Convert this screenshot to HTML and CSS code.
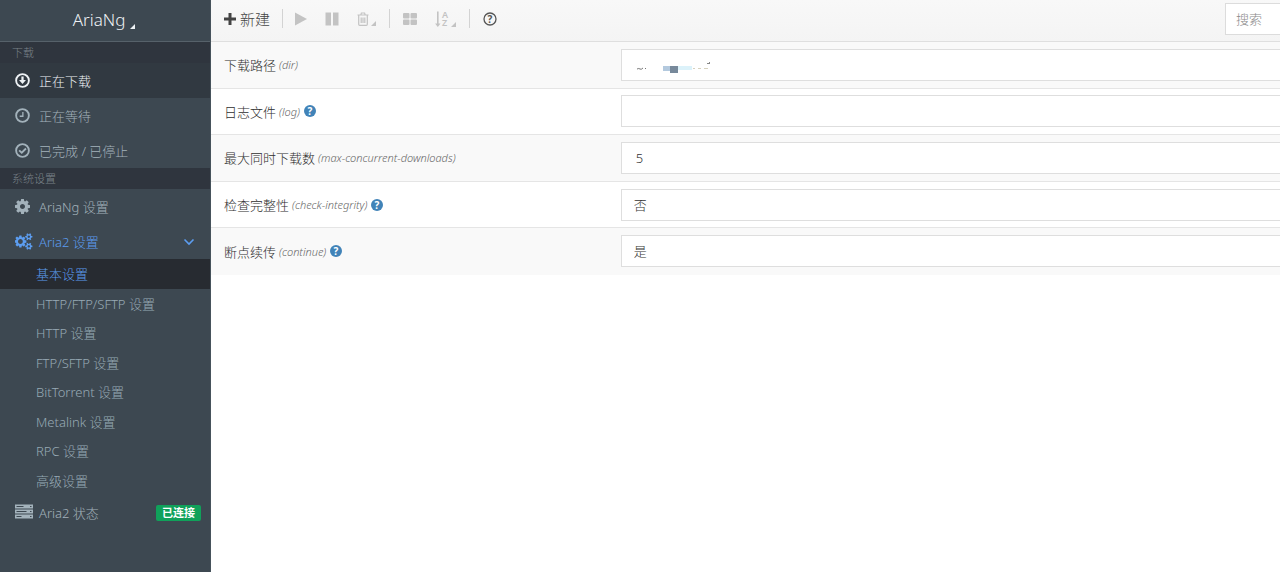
FILE: index.html
```html
<!DOCTYPE html>
<html lang="zh-CN">
<head>
<meta charset="utf-8">
<title>AriaNg</title>
<link rel="stylesheet" href="styles.css">
</head>
<body>
<div class="app">
  <aside class="sidebar">
    <button class="brand" type="button">AriaNg<svg class="corner" viewBox="0 0 6 6"><path d="M6 0v6H0z"/></svg></button>
    <nav class="nav">
      <h2 class="nav-title">下载</h2>
      <a class="nav-item is-current" href="#downloading">
        <svg class="icon" viewBox="0 0 16 16"><circle cx="8" cy="8" r="6.800" fill="none" stroke="currentColor" stroke-width="2"/><path d="M6.800 3.800h2.400v3.600h2.500L8 11.600 4.300 7.400h2.500z"/></svg>
        <span class="nav-text">正在下载</span></a>
      <a class="nav-item" href="#waiting">
        <svg class="icon" viewBox="0 0 16 16"><circle cx="8" cy="8" r="6.800" fill="none" stroke="currentColor" stroke-width="2"/><path d="M8.400 4.200v4.600H5" fill="none" stroke="currentColor" stroke-width="1.400"/></svg>
        <span class="nav-text">正在等待</span></a>
      <a class="nav-item" href="#stopped">
        <svg class="icon" viewBox="0 0 16 16"><circle cx="8" cy="8" r="6.800" fill="none" stroke="currentColor" stroke-width="2"/><path d="M4.400 7.800l2.800 2.600 4.500-4.500" fill="none" stroke="currentColor" stroke-width="2"/></svg>
        <span class="nav-text">已完成 / 已停止</span></a>
      <h2 class="nav-title">系统设置</h2>
      <a class="nav-item" href="#ariang">
        <svg class="icon" viewBox="128 128 1536 1536"><path d="M1152 896q0-106-75-181t-181-75-181 75-75 181 75 181 181 75 181-75 75-181zm512-109v222q0 12-8 23t-20 13l-185 28q-19 54-39 91 35 50 107 138 10 12 10 25t-9 23q-27 37-99 108t-94 71q-12 0-26-9l-138-108q-44 23-91 38-16 136-29 186-7 28-36 28h-222q-14 0-24.500-8.500t-11.500-21.500l-28-184q-49-16-90-37l-141 107q-10 9-25 9-14 0-25-11-126-114-165-168-7-10-7-23 0-12 8-23 15-21 51-66.500t54-70.500q-27-50-41-99l-183-27q-13-2-21-12.500t-8-23.500v-222q0-12 8-23t19-13l186-28q14-46 39-92-40-57-107-138-10-12-10-24 0-10 9-23 26-36 98.500-107.500t94.500-71.500q13 0 26 10l138 107q44-23 91-38 16-136 29-186 7-28 36-28h222q14 0 24.500 8.500t11.500 21.500l28 184q49 16 90 37l142-107q9-9 24-9 13 0 25 10 129 119 165 170 7 8 7 22 0 12-8 23-15 21-51 66.500t-54 70.500q26 50 41 98l183 28q13 2 21 12.500t8 23.500z"/></svg>
        <span class="nav-text">AriaNg 设置</span></a>
      <a class="nav-item is-open" href="#aria2">
        <svg class="icon icon-wide" viewBox="0 0 1920 1792"><path d="M832 896q0-106-75-181t-181-75-181 75-75 181 75 181 181 75 181-75 75-181zm768 512q0-52-38-90t-90-38-90 38-38 90q0 53 37.500 90.500t90.500 37.500 90.500-37.500 37.500-90.500zm0-1024q0-52-38-90t-90-38-90 38-38 90q0 53 37.500 90.500t90.500 37.500 90.500-37.500 37.500-90.500zm-384 421v185q0 10-7 19.500t-16 10.500l-155 24q-11 35-32 76 34 48 90 115 7 10 7 20 0 12-7 19-23 30-82.500 89.500t-78.500 59.500q-11 0-21-7l-115-90q-37 19-77 31-11 108-23 155-7 24-30 24h-186q-11 0-20-7.500t-10-17.500l-23-153q-34-10-75-31l-118 89q-7 7-20 7-11 0-21-8-144-133-144-160 0-9 7-19 10-14 41-53t47-61q-23-44-35-82l-152-24q-10-1-17-9.500t-7-19.500v-185q0-10 7-19.500t16-10.500l155-24q11-35 32-76-34-48-90-115-7-11-7-20 0-12 7-20 22-30 82-89t79-59q11 0 21 7l115 90q34-18 77-32 11-108 23-154 7-24 30-24h186q11 0 20 7.500t10 17.500l23 153q34 10 75 31l118-89q8-7 20-7 11 0 21 8 144 133 144 160 0 9-7 19-12 16-42 54t-45 60q23 48 34 82l152 23q10 2 17 10.500t7 19.500zm640 533v140q0 16-149 31-12 27-30 52 51 113 51 138 0 4-4 7-122 71-124 71-8 0-46-47t-52-68q-20 2-30 2t-30-2q-14 21-52 68t-46 47q-2 0-124-71-4-3-4-7 0-25 51-138-18-25-30-52-149-15-149-31v-140q0-16 149-31 13-29 30-52-51-113-51-138 0-4 4-7 4-2 35-20t59-34 30-16q8 0 46 46.500t52 67.500q20-2 30-2t30 2q51-71 92-112l6-2q4 0 124 70 4 3 4 7 0 25-51 138 17 23 30 52 149 15 149 31zm0-1024v140q0 16-149 31-12 27-30 52 51 113 51 138 0 4-4 7-122 71-124 71-8 0-46-47t-52-68q-20 2-30 2t-30-2q-14 21-52 68t-46 47q-2 0-124-71-4-3-4-7 0-25 51-138-18-25-30-52-149-15-149-31v-140q0-16 149-31 13-29 30-52-51-113-51-138 0-4 4-7 4-2 35-20t59-34 30-16q8 0 46 46.500t52 67.500q20-2 30-2t30 2q51-71 92-112l6-2q4 0 124 70 4 3 4 7 0 25-51 138 17 23 30 52 149 15 149 31z"/></svg>
        <span class="nav-text">Aria2 设置</span>
        <svg class="chevron" viewBox="0 0 12 12"><path d="M1.500 3.500L6 8l4.500-4.500" fill="none" stroke="currentColor" stroke-width="1.600"/></svg></a>
      <div class="subnav">
        <a class="subnav-item is-active" href="#basic">基本设置</a>
        <a class="subnav-item" href="#http-ftp-sftp">HTTP/FTP/SFTP 设置</a>
        <a class="subnav-item" href="#http">HTTP 设置</a>
        <a class="subnav-item" href="#ftp-sftp">FTP/SFTP 设置</a>
        <a class="subnav-item" href="#bt">BitTorrent 设置</a>
        <a class="subnav-item" href="#metalink">Metalink 设置</a>
        <a class="subnav-item" href="#rpc">RPC 设置</a>
        <a class="subnav-item" href="#advanced">高级设置</a>
      </div>
      <a class="nav-item" href="#status">
        <svg class="icon icon-wide" viewBox="0 0 18 16"><path fill-rule="evenodd" d="M0 0h18v4H0zM1.500 1.500v1h7v-1zM15 1.400v1.200h1.500V1.400zM0 5h18v4H0zM1.500 6.500v1h10v-1zM15 6.400v1.200h1.500V6.400zM0 10h18v4H0zM1.500 11.500v1h5v-1zM15 11.400v1.200h1.500v-1.200z"/></svg>
        <span class="nav-text">Aria2 状态</span>
        <span class="badge">已连接</span></a>
    </nav>
  </aside>
  <main class="main">
    <header class="toolbar">
      <div class="tools">
        <button class="tool tool-new" type="button"><svg viewBox="0 0 12 12"><path d="M4.500 0h3v4.500H12v3H7.500V12h-3V7.500H0v-3h4.500z"/></svg><span>新建</span></button>
        <span class="divider"></span>
        <button class="tool tool-play" type="button" disabled aria-label="开始"><svg viewBox="0 0 12 14"><path d="M0 0.500l12 6.500-12 6.500z"/></svg></button>
        <button class="tool tool-pause" type="button" disabled aria-label="暂停"><svg viewBox="0 0 14 14"><path d="M0.500 0.500h5.500v13H0.500zM8 0.500h5.500v13H8z"/></svg></button>
        <button class="tool tool-trash" type="button" disabled aria-label="删除"><svg viewBox="0 0 12 14"><path d="M0.500 3h11M3.800 3l.6-2h3.200l.6 2M1.700 3.500v8.700q0 1.200 1 1.200h6.600q1 0 1-1.200V3.500M4.200 5.500v5.500M6 5.500v5.500M7.800 5.500v5.500" fill="none" stroke="currentColor" stroke-width="1.200"/></svg><svg class="corner" viewBox="0 0 6 6"><path d="M6 0v6H0z"/></svg></button>
        <span class="divider"></span>
        <button class="tool tool-grid" type="button" disabled aria-label="显示"><svg viewBox="0 0 14 12"><path d="M1 0h4.500q1 0 1 1v3.400q0 1-1 1H1q-1 0-1-1V1q0-1 1-1zM8.500 0H13q1 0 1 1v3.400q0 1-1 1H8.500q-1 0-1-1V1q0-1 1-1zM1 6.600h4.500q1 0 1 1V11q0 1-1 1H1q-1 0-1-1V7.600q0-1 1-1zM8.500 6.600H13q1 0 1 1V11q0 1-1 1H8.500q-1 0-1-1V7.600q0-1 1-1z"/></svg></button>
        <button class="tool tool-sort" type="button" disabled aria-label="排序"><svg viewBox="0 0 15 18"><path d="M2 1.500h1.600v12h1.900L2.800 17 .1 13.500H2z"/><text x="7" y="8" class="sort-letter">A</text><text x="7" y="16" class="sort-letter">Z</text></svg><svg class="corner" viewBox="0 0 6 6"><path d="M6 0v6H0z"/></svg></button>
        <span class="divider"></span>
        <button class="tool tool-help" type="button" aria-label="帮助"><svg viewBox="0 0 14 14"><circle cx="7" cy="7" r="6" fill="none" stroke="currentColor" stroke-width="1.300"/><text x="7" y="10.500" class="mark">?</text></svg></button>
      </div>
      <input class="search" type="text" placeholder="搜索" aria-label="搜索">
    </header>
    <form class="settings">
      <div class="row">
        <label class="label" for="dir">下载路径 <em>(dir)</em></label>
        <div class="field"><input class="control" id="dir" type="text">
          <svg class="masked" viewBox="0 0 80 16"><path d="M2 11q2-1 3 0t3-1M10 10.500h1" stroke="#777" fill="none"/><path fill="#b3c9de" d="M28 8h8v5h-8z"/><path fill="#77899b" d="M35 8h8v7h-8z"/><path fill="#dcf2fa" d="M43 8h14v4H43z"/><path d="M58 10.500h2M63 10.500h3M69 10.500h4" stroke="#d6d1be"/><path d="M72 5.500h3M74.500 4v2" stroke="#888"/></svg></div>
      </div>
      <div class="row">
        <label class="label" for="log">日志文件 <em>(log)</em><svg class="hint" viewBox="0 0 12 12"><circle cx="6" cy="6" r="6"/><text x="6" y="9.800" class="mark">?</text></svg></label>
        <div class="field"><input class="control" id="log" type="text"></div>
      </div>
      <div class="row">
        <label class="label" for="max">最大同时下载数 <em>(max-concurrent-downloads)</em></label>
        <div class="field"><input class="control" id="max" type="text" value="5"></div>
      </div>
      <div class="row">
        <label class="label" for="check">检查完整性 <em>(check-integrity)</em><svg class="hint" viewBox="0 0 12 12"><circle cx="6" cy="6" r="6"/><text x="6" y="9.800" class="mark">?</text></svg></label>
        <div class="field"><select class="control" id="check"><option>否</option><option>是</option></select></div>
      </div>
      <div class="row">
        <label class="label" for="continue">断点续传 <em>(continue)</em><svg class="hint" viewBox="0 0 12 12"><circle cx="6" cy="6" r="6"/><text x="6" y="9.800" class="mark">?</text></svg></label>
        <div class="field"><select class="control" id="continue"><option>是</option><option>否</option></select></div>
      </div>
    </form>
  </main>
</div>
</body>
</html>
```
FILE: styles.css
```css
* { box-sizing: border-box; }
body {
  margin: 0;
  background: #fff;
  color: #2e2e2e;
  font-family: "Noto Sans", "Noto Sans CJK SC", sans-serif;
  font-size: 13px;
  font-weight: 300;
}
button, input, select { font: inherit; color: inherit; }
svg { fill: currentColor; flex: none; display: block; }
a { color: inherit; text-decoration: none; }

.app { display: flex; min-height: 100vh; overflow: hidden; }

.sidebar { flex: none; width: 211px; background: #3d4851; color: #a3b2bb; border-right: 1px solid #46525b; }
.brand {
  display: flex; align-items: center; justify-content: center; gap: 5px;
  width: 100%; height: 42px; padding: 0 2px 2px 0;
  border: 0; border-bottom: 1px solid #56616a; background: none;
  color: #eef2f5; font-size: 17px;
}
.corner { width: 5px; height: 5px; align-self: flex-end; }
.brand .corner { margin-bottom: 10px; }
.nav-title {
  margin: 0; padding: 0 12px; background: #2f353e; color: #7a838a;
  font-size: 11px; font-weight: 300; line-height: 21px;
}
.nav-item { display: flex; align-items: center; height: 35px; padding: 0 9px 0 15px; }
.nav-item .icon { width: 15px; height: 15px; margin-right: 9px; }
.nav-item .icon-wide { width: 18px; height: 17px; margin-right: 6px; }
.nav-text { flex: 1; }
.nav-item.is-current { background: #313941; color: #eef2f5; }
.nav-item.is-open { color: #5c9df0; }
.nav-item .chevron { width: 12px; height: 12px; margin-right: 6px; }
.badge {
  padding: 0 6px; border-radius: 2px; background: #10a15a; color: #fff;
  font-size: 11px; font-weight: 700; line-height: 16px;
}
.subnav { display: grid; grid-auto-rows: 1fr; min-height: 236px; }
.subnav-item { display: flex; align-items: center; padding-left: 36px; color: #98aab5; }
.subnav-item.is-active { background: #272b31; color: #5c9df0; }

.main { flex: 1; min-width: 0; }
.toolbar {
  display: flex; justify-content: space-between; align-items: center;
  height: 42px; padding-bottom: 4px;
  border-bottom: 1px solid #dfdfdf;
  background: linear-gradient(#f8f8f8, #f4f4f4);
}
.tools { display: flex; align-items: center; padding-left: 13px; }
.tool { display: flex; align-items: center; padding: 0; border: 0; background: none; color: #555; }
.tool:disabled { color: #c3c3c3; }
.tool .corner { width: 5px; height: 5px; margin-left: 2px; }
.tool-new { gap: 4px; font-size: 15px; line-height: 20px; color: #444; }
.tool-new svg { width: 12px; height: 12px; }
.divider { width: 1px; height: 19px; margin: 0 13px; background: #d3d3d3; }
.tool-new + .divider { margin: 0 12px; }
.tool-play svg { width: 12px; height: 14px; }
.tool-pause { margin: 0 18px; }
.tool-pause svg { width: 14px; height: 14px; }
.tool-trash svg { width: 12px; height: 14px; }
.tool-grid { margin-right: 18px; }
.tool-grid svg { width: 14px; height: 12px; }
.tool-sort svg { width: 15px; height: 18px; }
.tool-sort .corner { margin-left: 1px; margin-bottom: 1px; }
.tool-help svg { width: 14px; height: 14px; }
.sort-letter { font-size: 9px; font-weight: 600; }
.mark { font-size: 10px; font-weight: 700; text-anchor: middle; }
.search {
  width: 56px; height: 32px; margin-right: -1px; padding: 0 10px;
  border: 1px solid #dcdcdc; background: #fff; outline: 0;
}
.search::placeholder { color: #888; opacity: 1; }

.settings { display: grid; grid-auto-rows: 1fr; min-height: 233px; }
.row { display: grid; grid-template-columns: 23fr 37fr; align-items: center; border-bottom: 1px solid #e5e5e5; }
.row:nth-child(odd) { background: #f9f9f9; }
.row:last-child { border-bottom-color: #f9f9f9; }
.label { display: flex; align-items: center; padding-left: 13px; }
.label em { margin-left: 3px; color: #666; font-size: 11px; }
.hint { width: 12px; height: 12px; margin-left: 4px; color: #4183b8; }
.hint .mark { fill: #fff; }
.field { position: relative; margin-right: -1px; }
.control {
  display: block; width: 100%; height: 32px; padding: 0 12px;
  border: 1px solid #dedede; border-radius: 0; background: #fff;
  appearance: none; outline: 0; color: #333;
}
input.control { padding: 0 14px; }
.masked { position: absolute; left: 14px; top: 9px; width: 80px; height: 16px; }
```
